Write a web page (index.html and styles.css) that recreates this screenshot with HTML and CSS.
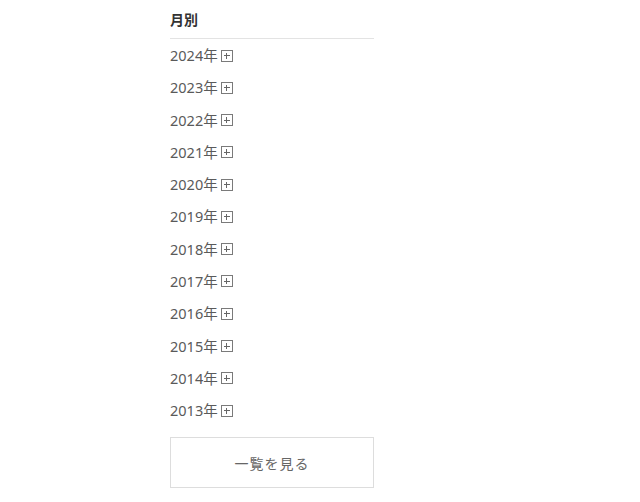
FILE: index.html
```html
<!DOCTYPE html>
<html lang="ja">
<head>
<meta charset="utf-8">
<link rel="stylesheet" href="styles.css">
</head>
<body>
<div class="widget">
  <h2 class="title">月別</h2>
  <ul class="years">
    <li><span class="label">2024年</span><span class="plus"></span></li>
    <li><span class="label">2023年</span><span class="plus"></span></li>
    <li><span class="label">2022年</span><span class="plus"></span></li>
    <li><span class="label">2021年</span><span class="plus"></span></li>
    <li><span class="label">2020年</span><span class="plus"></span></li>
    <li><span class="label">2019年</span><span class="plus"></span></li>
    <li><span class="label">2018年</span><span class="plus"></span></li>
    <li><span class="label">2017年</span><span class="plus"></span></li>
    <li><span class="label">2016年</span><span class="plus"></span></li>
    <li><span class="label">2015年</span><span class="plus"></span></li>
    <li><span class="label">2014年</span><span class="plus"></span></li>
    <li><span class="label">2013年</span><span class="plus"></span></li>
  </ul>
  <a class="more" href="#">一覧を見る</a>
</div>
</body>
</html>
```
FILE: styles.css
```css
html, body {
  margin: 0;
  padding: 0;
  background: #fff;
}
body {
  font-family: "Noto Sans CJK JP", "Noto Sans", sans-serif;
  color: #555;
}
.widget {
  width: 204px;
  margin-left: 170px;
}
.title {
  margin: 0;
  padding: 9px 0 8px;
  font-size: 14px;
  line-height: 21px;
  font-weight: bold;
  color: #333;
  border-bottom: 1px solid #e3e3e3;
}
.years {
  list-style: none;
  margin: 0;
  padding: 0;
}
.years li {
  height: 32.27px;
  display: flex;
  align-items: center;
  color: #555;
}
.label {
  font-family: "Noto Sans", "Noto Sans CJK JP", sans-serif;
  font-size: 14.5px;
  line-height: 20px;
  color: #5a5a5a;
}
.plus {
  position: relative;
  width: 10px;
  height: 10px;
  border: 1px solid #7a7a7a;
  margin-left: 3px;
  margin-top: 1px;
}
.plus::before, .plus::after {
  content: "";
  position: absolute;
  background: #666;
}
.plus::before {
  left: 2px;
  right: 2px;
  top: 4.5px;
  height: 1px;
}
.plus::after {
  top: 2px;
  bottom: 2px;
  left: 4.5px;
  width: 1px;
}
.more {
  display: flex;
  align-items: center;
  justify-content: center;
  box-sizing: border-box;
  margin-top: 11px;
  height: 51px;
  border: 1px solid #ddd;
  font-size: 14px;
  letter-spacing: 1px;
  color: #666;
  text-decoration: none;
}
```
